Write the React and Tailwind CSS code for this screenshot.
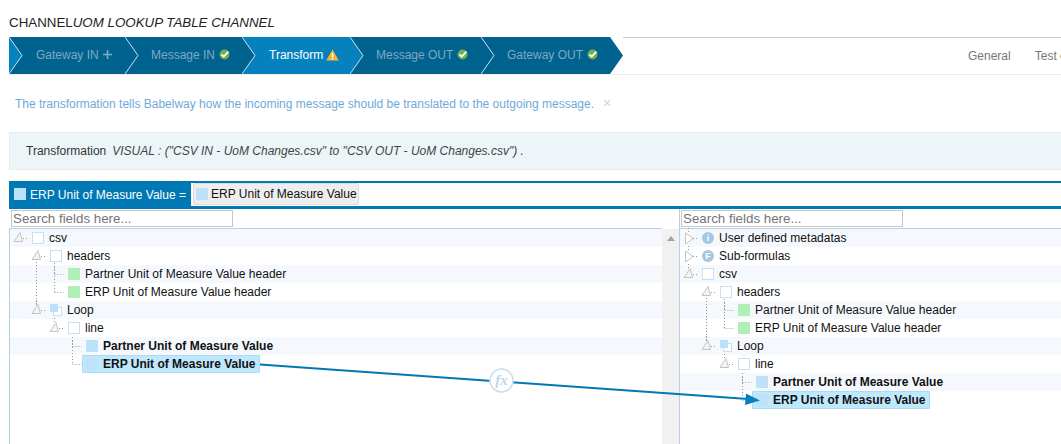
import React from "react";

const font = "font-['Liberation_Sans',Arial,sans-serif]";

function Check() {
  return (
    <svg width="11" height="11" viewBox="0 0 11 11" className="shrink-0 ml-[4px] mb-[2px]">
      <circle cx="5.5" cy="5.5" r="5" fill="#6fb04f" />
      <path d="M2.5 5.5 L4.8 7.6 L9.4 2.6" fill="none" stroke="#fff" strokeWidth="1.8" />
    </svg>
  );
}
function Plus() {
  return (
    <svg width="9" height="9" viewBox="0 0 9 9" className="shrink-0 ml-[4px] mb-[1px]">
      <path d="M4.5 0 V9 M0 4.5 H9" stroke="#7fa9c0" strokeWidth="1.6" />
    </svg>
  );
}
function Warn() {
  return (
    <svg width="13" height="12" viewBox="0 0 13 12" className="shrink-0 ml-[3px] mb-[1px]">
      <path d="M6.5 0.5 L12.8 11.5 H0.2 Z" fill="#f5b335" />
      <path d="M6.5 4 V8" stroke="#fff" strokeWidth="1.4" />
      <path d="M6.5 9 V10.4" stroke="#fff" strokeWidth="1.4" />
    </svg>
  );
}

const LIGHT = "#0582bd";
const DARK = "#00628f";

function Step({ w, label, active, notch, pl, children }) {
  return (
    <div className={`relative h-[37px] pb-[1px] flex items-center shrink-0 ${w} ${pl} ${active ? "bg-[#0582bd] text-white" : "bg-[#00628f] text-[#7fa9c0]"}`}>
      <svg width="14" height="37" viewBox="0 0 14 37" className="absolute left-0 top-0">
        <polygon points="0,0 13,18.5 0,37" fill={notch} />
        <polyline points="0,0 13,18.5 0,37" fill="none" stroke="#cfe0ea" strokeWidth="1" />
      </svg>
      <span className="whitespace-nowrap">{label}</span>
      {children}
    </div>
  );
}

function Box({ kind }) {
  if (kind === "green") return <span className="w-[12px] h-[12px] bg-[#b0efb8] shrink-0" />;
  if (kind === "blue") return <span className="w-[12px] h-[12px] bg-[#bde2f7] shrink-0" />;
  if (kind === "sel") return <span className="w-[12px] h-[12px] bg-[#bce3f9] shrink-0" />;
  if (kind === "loop")
    return (
      <span className="relative w-[12px] h-[12px] shrink-0">
        <span className="absolute left-[3px] top-[3px] w-[9px] h-[9px] border border-[#c9e0f0] bg-white" />
        <span className="absolute left-0 top-0 w-[8px] h-[8px] bg-[#bde2f7]" />
      </span>
    );
  if (kind === "i" || kind === "f")
    return (
      <span className="w-[12px] h-[12px] rounded-full bg-[#a3c8e4] text-white text-[9px] font-bold leading-[12px] text-center shrink-0">
        {kind === "i" ? "i" : "F"}
      </span>
    );
  return <span className="w-[12px] h-[12px] border border-[#c9e0f0] bg-white shrink-0" />;
}

function Expander({ open, down = 0, up = false }) {
  return (
    <svg width="18" height="18" viewBox="0 0 18 18" className="shrink-0 overflow-visible">
      {down > 0 && <line x1="8.5" y1="12" x2="8.5" y2={12 + down} stroke="#999" strokeDasharray="1 2" />}
      {up && <line x1="8.5" y1="-1" x2="8.5" y2="4" stroke="#999" strokeDasharray="1 2" />}
      <line x1="13" y1="9.5" x2="18" y2="9.5" stroke="#999" strokeDasharray="1 2" />
      {open ? (
        <polygon points="4,12.5 10,3.5 12.5,12.5" fill="#f4f4f4" stroke="#c4c4c4" />
      ) : (
        <polygon points="5.5,4 13,9.5 5.5,15" fill="#fff" stroke="#c4c4c4" />
      )}
    </svg>
  );
}

function Leaf({ up }) {
  return (
    <svg width="18" height="18" viewBox="0 0 18 18" className="shrink-0 overflow-visible">
      <line x1="8.5" y1={-up} x2="8.5" y2="9.5" stroke="#999" strokeDasharray="1 2" />
      <line x1="8.5" y1="9.5" x2="18" y2="9.5" stroke="#999" strokeDasharray="1 2" />
    </svg>
  );
}

const INDENT = { 0: "pl-0", 1: "pl-[18px]", 2: "pl-[36px]", 3: "pl-[54px]" };

function Row({ depth, shaded, label, box, open, closed, down, up, leafUp, bold, selected }) {
  const isLeaf = leafUp !== undefined;
  return (
    <div className={`h-[18px] flex items-center ${INDENT[depth]} ${shaded ? "bg-[#f5f9fd]" : ""}`}>
      {isLeaf ? <Leaf up={leafUp} /> : <Expander open={open && !closed} down={down} up={up} />}
      {selected ? (
        <span className="h-[18px] pl-[3px] pr-[3px] flex items-center bg-[#c0e8fd] border border-[#aedbf3] rounded-[1px] relative whitespace-nowrap">
          <Box kind="sel" />
          <span className="ml-[5px] font-bold text-[#111]">{label}</span>
        </span>
      ) : (
        <>
          <span className="ml-[4px] flex"><Box kind={box} /></span>
          <span className={`ml-[5px] text-[#111] whitespace-nowrap ${bold ? "font-bold" : ""}`}>{label}</span>
        </>
      )}
    </div>
  );
}

function Tree({ meta }) {
  return (
    <div>
      {meta && <Row depth={0} shaded closed label="User defined metadatas" box="i" up />}
      {meta && <Row depth={0} closed label="Sub-formulas" box="f" up />}
      <Row depth={0} shaded open label="csv" box="empty" up={meta} />
      <Row depth={1} open down={46} label="headers" box="empty" />
      <Row depth={2} shaded leafUp={2} label="Partner Unit of Measure Value header" box="green" />
      <Row depth={2} leafUp={16} label="ERP Unit of Measure Value header" box="green" />
      <Row depth={1} shaded open up label="Loop" box="loop" />
      <Row depth={2} open up label="line" box="empty" />
      <Row depth={3} shaded leafUp={0} label="Partner Unit of Measure Value" box="blue" bold />
      <Row depth={3} leafUp={14} label="ERP Unit of Measure Value" selected />
    </div>
  );
}

function Search({ ml }) {
  return (
    <input
      readOnly
      placeholder="Search fields here..."
      className={`block w-[222px] h-[17px] px-[1px] border border-[#c8c8c8] bg-white text-[13.33px] leading-[15px] placeholder:text-[#757575] outline-none ${ml}`}
    />
  );
}

export default function App() {
  return (
    <div className={`${font} relative w-[1061px] h-[444px] overflow-hidden bg-white text-[12px] text-[#333]`}>
      <div className="pl-[9px]">
        <div className="h-[37px] pt-[15px] text-[13.33px] leading-[16px] text-[#222] whitespace-nowrap">
          CHANNEL<i>UOM LOOKUP TABLE CHANNEL</i>
        </div>

        <div className="flex w-[1052px] h-[38px] border-b border-[#eeeeee] whitespace-nowrap">
          <Step w="w-[116px]" pl="pl-[27px]" label="Gateway IN" notch={LIGHT}><Plus /></Step>
          <Step w="w-[117px]" pl="pl-[26px]" label="Message IN" notch={DARK}><Check /></Step>
          <Step w="w-[108px]" pl="pl-[27px]" label="Transform" notch={DARK} active><Warn /></Step>
          <Step w="w-[131px]" pl="pl-[26px]" label="Message OUT" notch={LIGHT}><Check /></Step>
          <Step w="w-[129px]" pl="pl-[26px]" label="Gateway OUT" notch={DARK}><Check /></Step>
          <svg width="13" height="37" viewBox="0 0 13 37" className="shrink-0">
            <polygon points="0,0 13,18.5 0,37" fill={DARK} />
          </svg>
          <div className="flex-1 h-[37px] pb-[1px] border-t border-[#cccccc] flex items-center pl-[345px] text-[#777777] shrink-0 w-[600px]">
            <span>General</span>
            <span className="ml-[24px]">Test channel</span>
          </div>
        </div>

        <div className="h-[57px] flex items-center pl-[6px] text-[#6fa9d8]">
          <span>The transformation tells Babelway how the incoming message should be translated to the outgoing message.</span>
          <span className="ml-[9px] text-[#bcd6ea] text-[14px]">×</span>
        </div>

        <div className="h-[38px] flex items-center pl-[16px] bg-[#eef5f9] border border-[#e3eef4] border-r-0 text-[#333]">
          <span>Transformation</span>
          <i className="ml-[6px] text-[#444]">VISUAL : ("CSV IN - UoM Changes.csv" to "CSV OUT - UoM Changes.csv") .</i>
        </div>

        <div className="mt-[11px] h-[28px] flex border-t-2 border-b-[3px] border-[#0078b4]">
          <div className="w-[182px] bg-[#0078b4] text-white flex items-center pl-[5px] shrink-0">
            <span className="w-[12px] h-[12px] bg-[#bde2f7] mb-[1px]" />
            <span className="ml-[4px] whitespace-nowrap">ERP Unit of Measure Value =</span>
          </div>
          <div className="ml-[2px] flex items-center h-[22px] bg-[#eeeeee] border border-[#dddddd] rounded-[2px] pl-[2px] pr-[1px] text-[#111]">
            <span className="w-[12px] h-[12px] bg-[#bde2f7] mb-[1px]" />
            <span className="ml-[3px] whitespace-nowrap">ERP Unit of Measure Value</span>
          </div>
        </div>

        <div className="flex h-[235px]">
          <div className="w-[653px] shrink-0">
            <div className="h-[19px] pt-[1px]"><Search ml="ml-[2px]" /></div>
            <div className="h-[216px] border-l border-t border-[#b5d0e4]">
              <Tree />
            </div>
          </div>
          <div className="w-[17px] mt-[20px] bg-[#f1f1f1] shrink-0 flex justify-center pt-[7px]">
            <svg width="8" height="5" viewBox="0 0 8 5"><polygon points="4,0 8,5 0,5" fill="#a3a3a3" /></svg>
          </div>
          <div className="flex-1 border-l border-[#b5d0e4]">
            <div className="h-[19px] pt-[1px]"><Search ml="ml-[1px]" /></div>
            <div className="border-t border-[#b5d0e4]">
              <Tree meta />
            </div>
          </div>
        </div>
      </div>

      <svg width="1061" height="444" viewBox="0 0 1061 444" className="absolute left-0 top-0 pointer-events-none">
        <line x1="260" y1="364.5" x2="748" y2="399" stroke="#0078b4" strokeWidth="2" />
        <polygon points="746,393.5 760,400.5 745,405" fill="#0582bd" />
        <circle cx="501.5" cy="380.5" r="11.5" fill="#fff" stroke="#c5e1f1" strokeWidth="1.5" />
      </svg>
      <span className="absolute left-[494px] top-[372px] w-[15px] text-center font-['Liberation_Serif',serif] italic font-bold text-[15px] leading-[16px] text-[#b9d9ec]">fx</span>
    </div>
  );
}
